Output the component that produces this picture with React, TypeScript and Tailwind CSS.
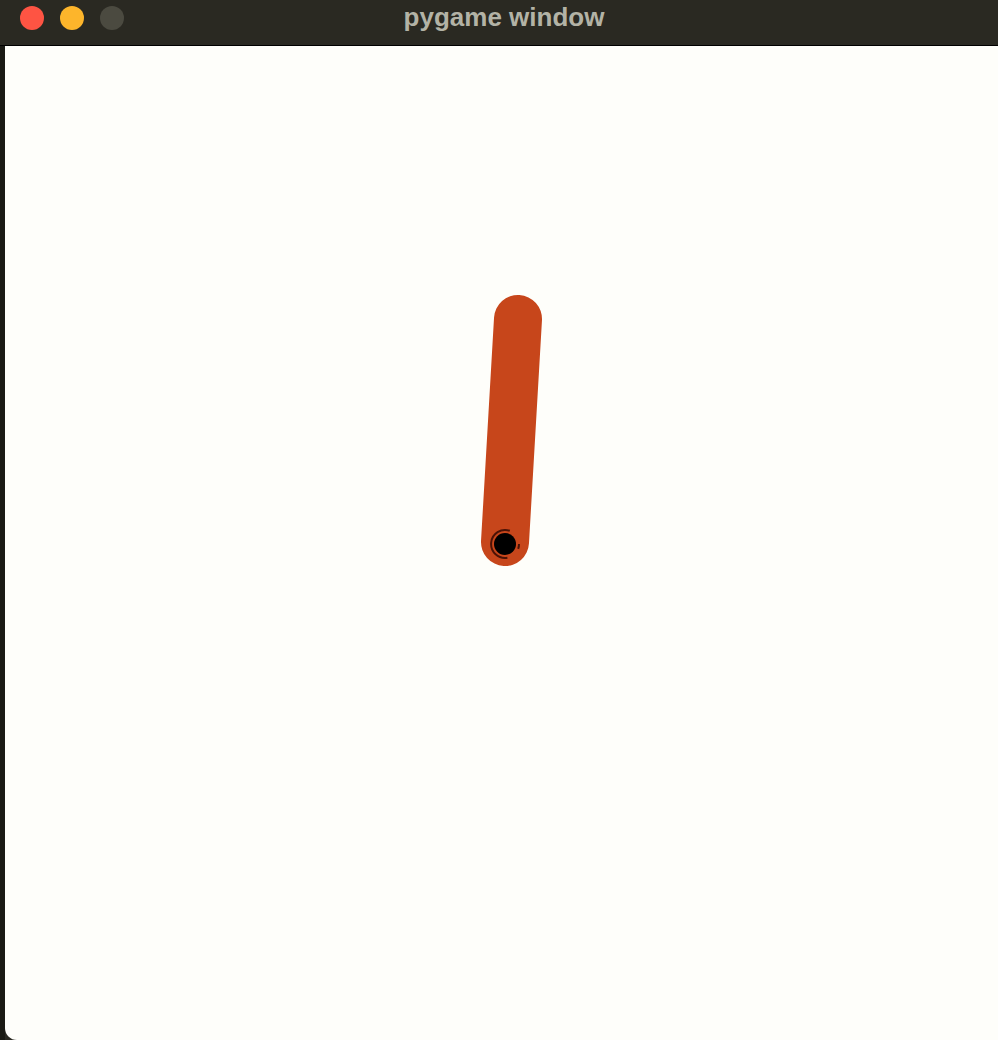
import React from "react";

export default function App() {
  return (
    <div className="w-[998px] h-[1040px] bg-[#2a2922] flex flex-col overflow-hidden" style={{ fontFamily: '"Liberation Sans", Arial, sans-serif' }}>
      <div className="h-[46px] flex items-center relative shrink-0 border-b border-black">
        <div className="flex items-center gap-[16px] pl-[20px] -mt-[10px]">
          <div className="w-[24px] h-[24px] rounded-full bg-[#fe5443]" />
          <div className="w-[24px] h-[24px] rounded-full bg-[#fdb52b]" />
          <div className="w-[24px] h-[24px] rounded-full bg-[#4b4a40]" />
        </div>
        <div className="absolute inset-0 flex items-start justify-center pointer-events-none">
          <span className="text-[26px] font-bold text-[#b3b3a6] leading-none ml-[10px] mt-[4px]">pygame window</span>
        </div>
      </div>
      <div className="flex-1 flex">
        <div className="w-[5px] bg-[#1a1a14]" />
        <div className="flex-1 bg-[#fefefa] rounded-bl-[12px]">
          <svg width="993" height="993" viewBox="5 47 993 993" className="block">
            <line x1="518" y1="320" x2="505" y2="543" stroke="#c7461b" strokeWidth="48" strokeLinecap="round" />
            <path d="M 509.8 531.8 A 14 14 0 1 0 507.4 558.8" fill="none" stroke="#4a1206" strokeWidth="2" />
            <path d="M 519 545 A 14 14 0 0 1 518.2 549.8" fill="none" stroke="#4a1206" strokeWidth="2" />
            <circle cx="505" cy="545" r="11" fill="#000" />
          </svg>
        </div>
      </div>
    </div>
  );
}
